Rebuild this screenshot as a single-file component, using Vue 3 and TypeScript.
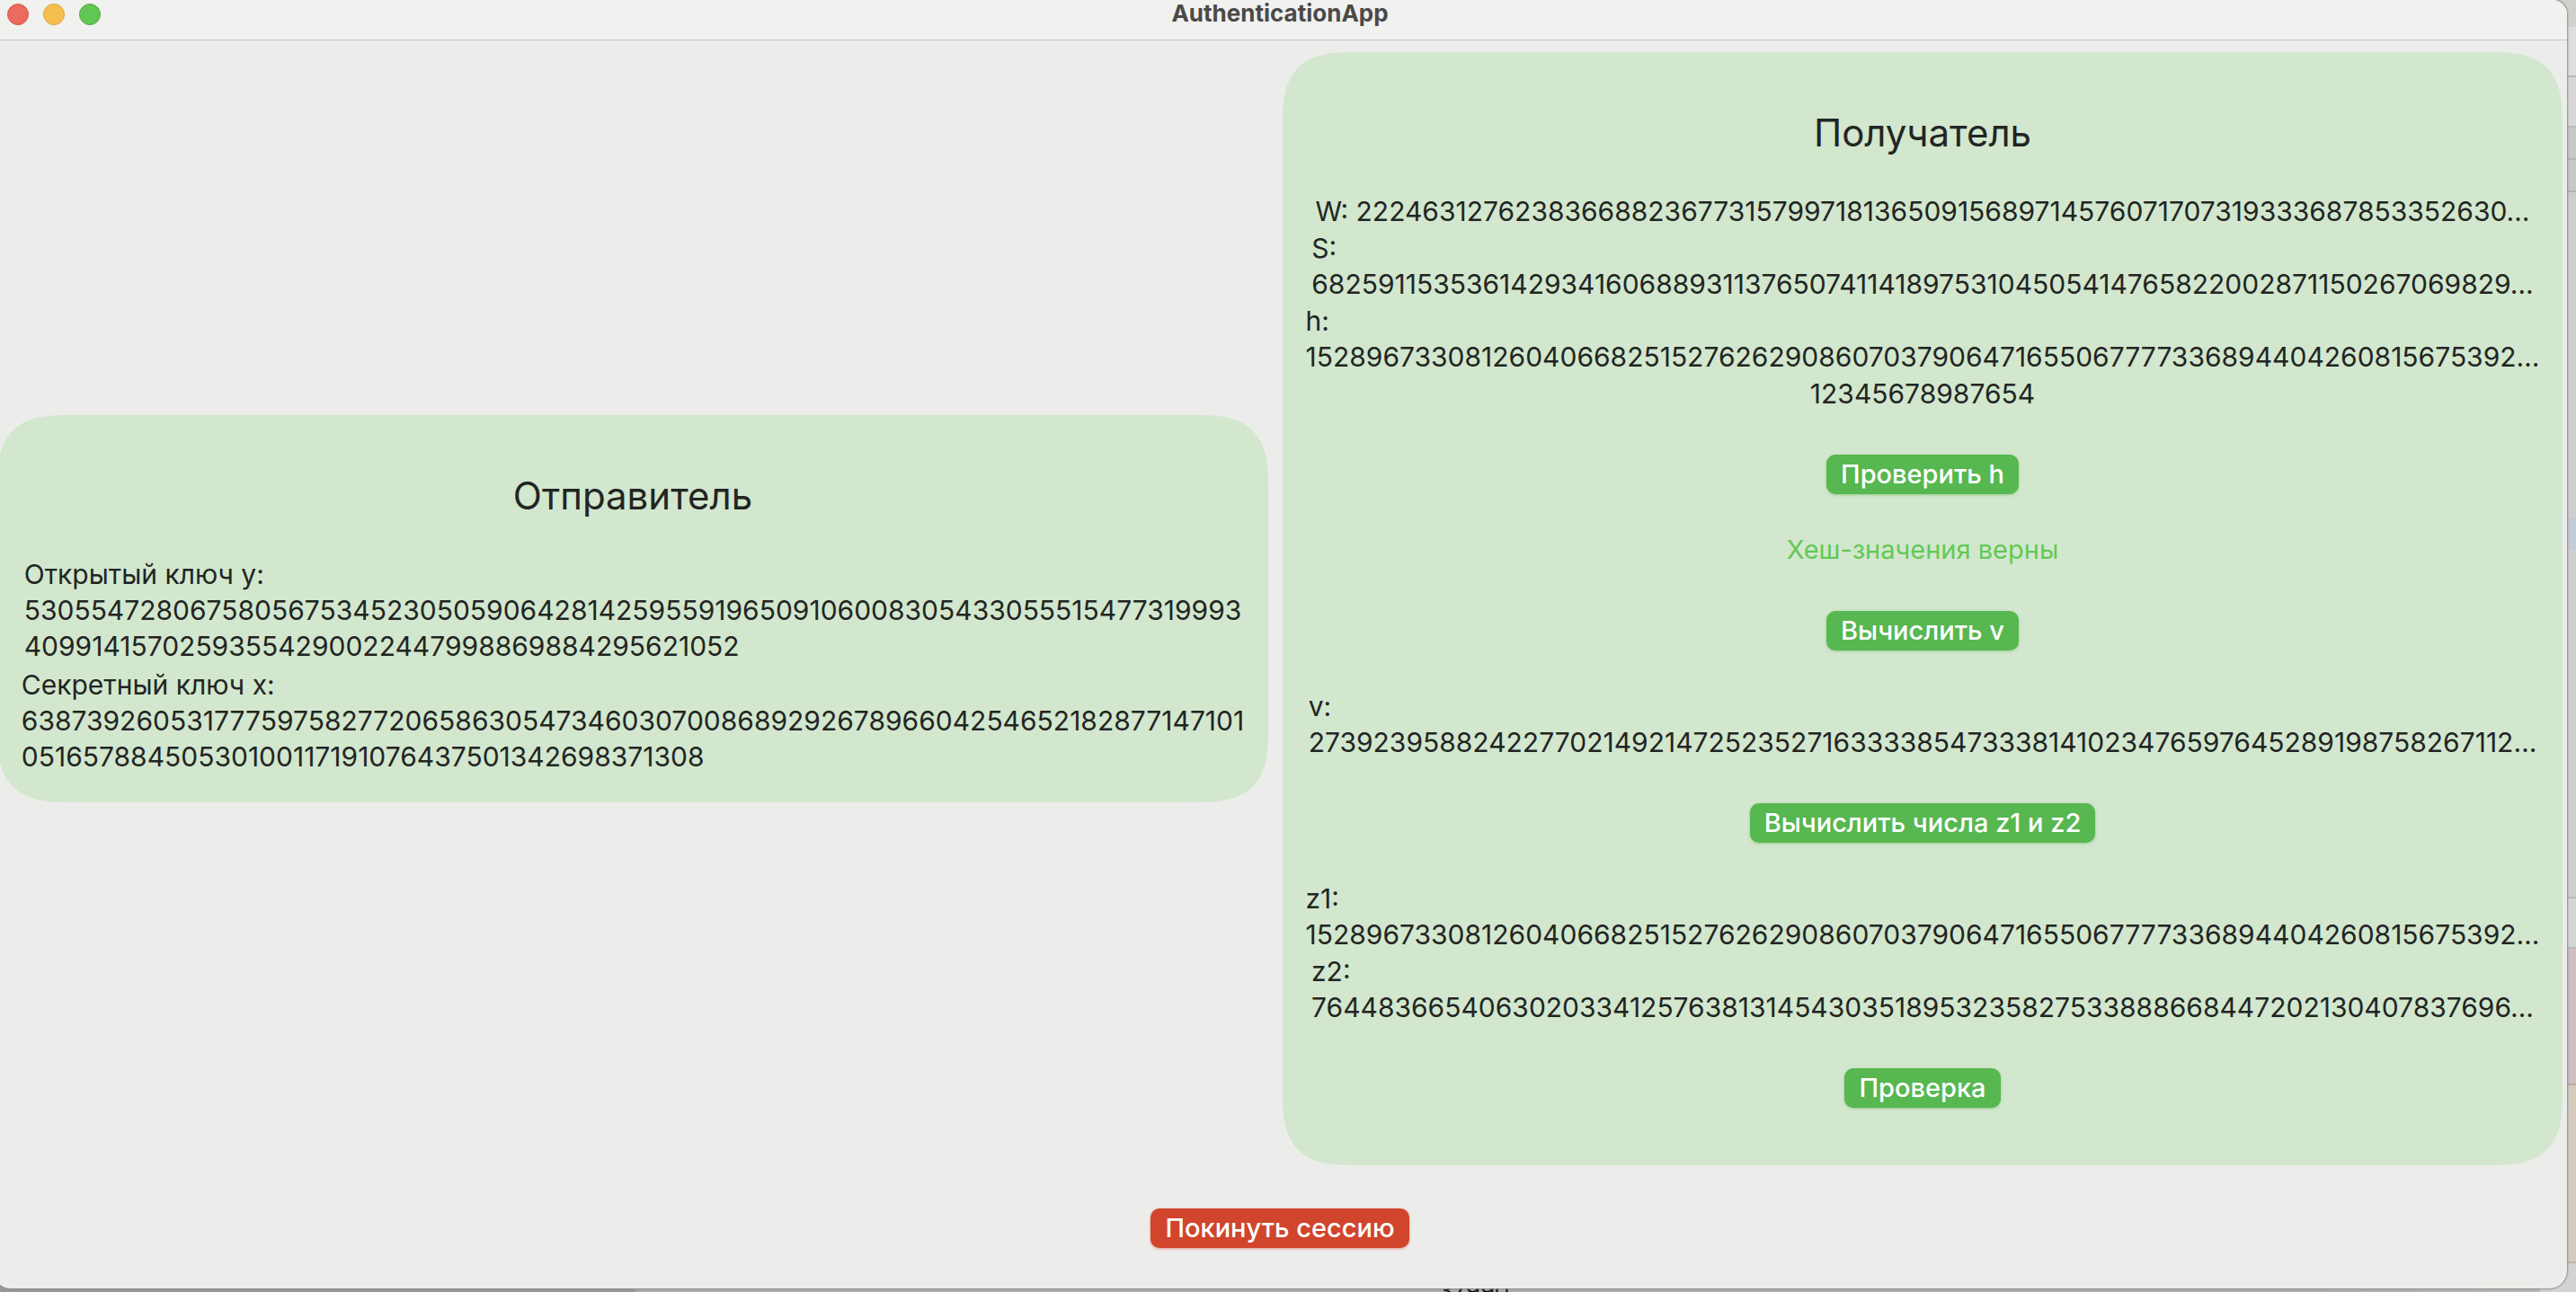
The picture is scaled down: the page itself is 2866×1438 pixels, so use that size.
<script setup lang="ts">
interface Entry {
  label: string
  value: string
  inline?: boolean
}

const senderKeys: Entry[] = [
  {
    label: 'Открытый ключ y:',
    value:
      '530554728067580567534523050590642814259559196509106008305433055515477319993' +
      '\n40991415702593554290022447998869884295621052',
  },
  {
    label: 'Секретный ключ x:',
    value:
      '6387392605317775975827720658630547346030700868929267896604254652182877147101' +
      '\n05165788450530100117191076437501342698371308',
  },
]

const received: Entry[] = [
  {
    label: 'W:',
    value: '2224631276238366882367731579971813650915689714576071707319333687853352630…',
    inline: true,
  },
  {
    label: 'S:',
    value: '68259115353614293416068893113765074114189753104505414765822002871150267069829…',
  },
  {
    label: 'h:',
    value: '152896733081260406682515276262908607037906471655067777336894404260815675392…',
  },
]

const message = '12345678987654'

const vEntry: Entry = {
  label: 'v:',
  value: '2739239588242277021492147252352716333385473338141023476597645289198758267112…',
}

const zEntries: Entry[] = [
  {
    label: 'z1:',
    value: '152896733081260406682515276262908607037906471655067777336894404260815675392…',
  },
  {
    label: 'z2:',
    value: '76448366540630203341257638131454303518953235827533888668447202130407837696…',
  },
]

const text = (e: Entry): string => e.label + (e.inline ? ' ' : '\n') + e.value
</script>

<template>
  <div class="desktop">
    <div class="behind" aria-hidden="true">
      <div class="behind-right"></div>
      <div class="behind-bottom"><span>37990</span></div>
    </div>

    <main class="window">
      <header class="titlebar">
        <div class="lights">
          <button class="light close" type="button" aria-label="Закрыть"></button>
          <button class="light minimize" type="button" aria-label="Свернуть"></button>
          <button class="light zoom" type="button" aria-label="Развернуть"></button>
        </div>
        <h1 class="app-title">AuthenticationApp</h1>
      </header>

      <div class="panels">
        <section class="panel sender">
          <h2 class="panel-title">Отправитель</h2>
          <div class="entries keys">
            <p v-for="e in senderKeys" :key="e.label" class="entry">{{ text(e) }}</p>
          </div>
        </section>

        <section class="panel receiver">
          <h2 class="panel-title">Получатель</h2>
          <div class="entries">
            <p v-for="e in received" :key="e.label" class="entry">{{ text(e) }}</p>
            <p class="entry">{{ message }}</p>
          </div>
          <button class="btn" type="button">Проверить h</button>
          <p class="entry status">Хеш-значения верны</p>
          <button class="btn" type="button">Вычислить v</button>
          <p class="entry">{{ text(vEntry) }}</p>
          <button class="btn" type="button">Вычислить числа z1 и z2</button>
          <div class="entries">
            <p v-for="e in zEntries" :key="e.label" class="entry">{{ text(e) }}</p>
          </div>
          <button class="btn last" type="button">Проверка</button>
        </section>
      </div>

      <footer class="footer">
        <button class="btn leave" type="button">Покинуть сессию</button>
      </footer>
    </main>
  </div>
</template>

<style>
body {
  margin: 0;
}
</style>

<style scoped>
.desktop {
  position: relative;
  min-height: 100vh;
  overflow: hidden;
  box-sizing: border-box;
  background: #d0d0d0;
  font-family: Inter, 'Liberation Sans', sans-serif;
  color: #222522;
}

.behind {
  position: absolute;
  inset: 0;
}

.behind-right {
  position: absolute;
  top: 0;
  right: 0;
  bottom: 0;
  width: 40px;
  background: linear-gradient(
    #d2d1ce 0 30px,
    #dededd 30px 84px,
    #b8b8b8 84px 86px,
    #d8d8d8 86px 140px,
    #b8b8b8 140px 142px,
    #c9c9c7 142px 176px,
    #b4b4b4 176px 178px,
    #c9c9c7 178px 212px,
    #b4b4b4 212px 214px,
    #cfcecf 214px 576px,
    #c5cbd6 576px 612px,
    #cfcfcf 612px 998px,
    #bababa 998px 1000px,
    #d5d5d5 1000px 1054px,
    #bdbdbd 1054px 1056px,
    #cfbfc3 1056px 1206px,
    #b5adaa 1206px 1208px,
    #d3ccbf 1208px 1404px,
    #bdb8ab 1404px 1406px,
    #d3d3d3 1406px
  );
}

.behind-bottom {
  position: absolute;
  left: 0;
  right: 40px;
  bottom: 0;
  height: 14px;
  overflow: hidden;
  background: linear-gradient(90deg, #999896 0 25%, #acacac 25% 90%, #b8b8b8);
}

.behind-bottom span {
  position: absolute;
  left: 1600px;
  top: 0;
  font-size: 26px;
  line-height: 26px;
  color: #111;
}

.window {
  position: relative;
  margin: 0 10px 0 -8px;
  background: #ececea;
  border-radius: 0 16px 20px 20px;
  box-shadow: 0 0 2px 1px #8c8c8c;
  overflow: hidden;
}

.titlebar {
  display: grid;
  grid-template-columns: 1fr auto 1fr;
  align-items: start;
  height: 44px;
  background: #f1f1ef;
  border-bottom: 1px solid #c6c6c5;
}

.lights {
  display: flex;
  gap: 16px;
  padding: 4px 16px;
}

.light {
  width: 24px;
  height: 24px;
  padding: 0;
  border: 1px solid;
  border-radius: 50%;
}

.close {
  background: #ed6a5f;
  border-color: #d9564c;
}

.minimize {
  background: #f5bf50;
  border-color: #dba33a;
}

.zoom {
  background: #62c655;
  border-color: #4fa942;
}

.app-title {
  margin: 0;
  font-size: 26px;
  line-height: 30px;
  font-weight: 700;
  color: #4a4a49;
}

.panels {
  display: grid;
  grid-template-columns: 1414fr 1424fr;
  gap: 16px;
  align-items: center;
  padding: 13px 5px 0;
}

.panel {
  display: flex;
  flex-direction: column;
  align-items: center;
  min-width: 0;
  border-radius: 64px;
  background: #d2e7ce;
}

@supports (corner-shape: superellipse(1.5)) {
  .panel {
    border-radius: 80px;
    corner-shape: superellipse(1.5);
  }
}

.sender {
  padding: 64px 0 31px;
}

.receiver {
  padding: 64px 0;
}

.panel-title {
  margin: 0 0 41px;
  font-size: 42px;
  line-height: 52px;
  font-weight: 400;
}

.entries {
  display: flex;
  flex-direction: column;
  align-items: center;
  gap: 1px;
}

.keys {
  gap: 3px;
}

.entry {
  margin: 0;
  font-size: 30px;
  line-height: 40px;
  white-space: pre;
}

.status {
  font-size: 29px;
  color: #62c955;
}

.btn {
  height: 44px;
  margin: 48px 0 42px;
  padding: 0 16px;
  border: 0;
  border-radius: 10px;
  background: #57b750;
  box-shadow: 0 1px 3px rgba(87, 183, 80, 0.5);
  color: #fff;
  font-family: inherit;
  font-size: 29px;
  line-height: 44px;
  font-weight: 500;
}

.last {
  margin-bottom: 0;
}

.footer {
  display: flex;
  justify-content: center;
}

.leave {
  margin-bottom: 45px;
  background: #d1452c;
  box-shadow: 0 1px 3px rgba(209, 69, 44, 0.5);
}
</style>
